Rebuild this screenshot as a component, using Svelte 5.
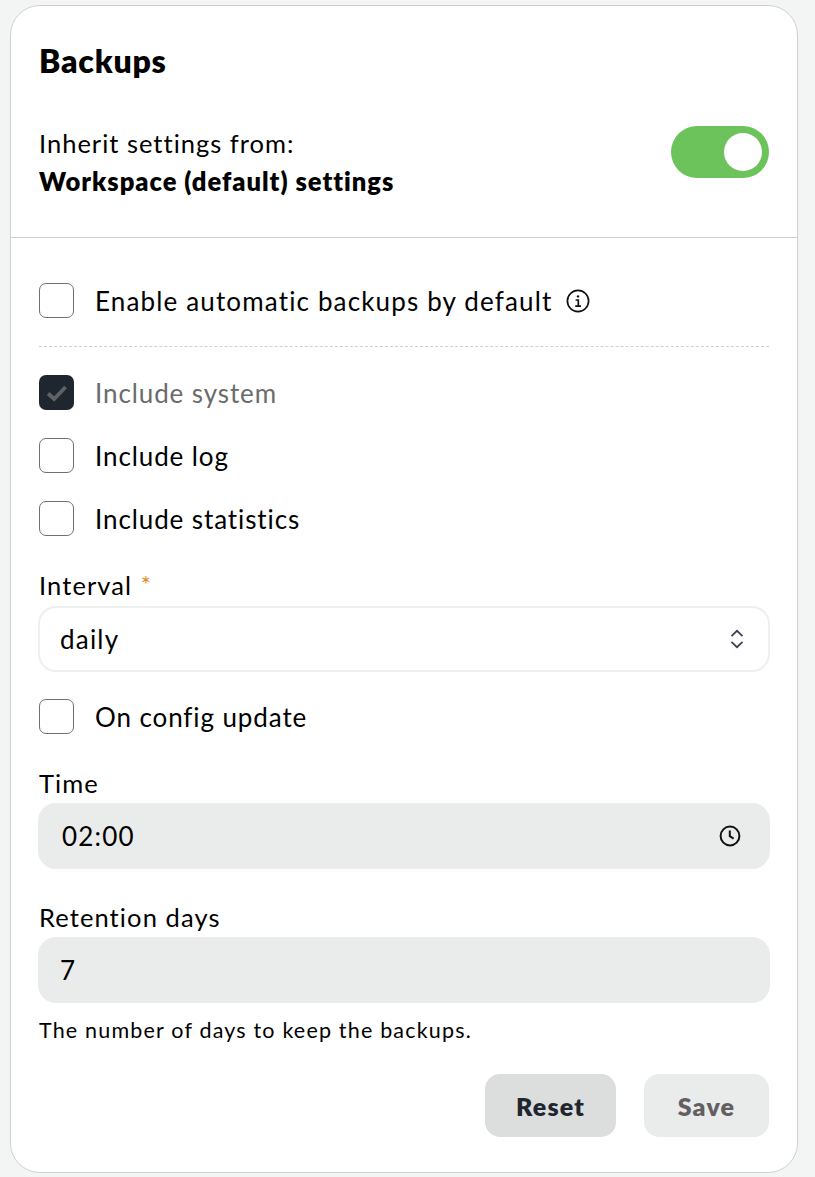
<script>
  let inherit = $state(true);
  let enableAuto = $state(false);
  let includeLog = $state(false);
  let includeStats = $state(false);
  let onConfig = $state(false);
  let interval = $state('daily');
  let time = $state('02:00');
  let retention = $state('7');

  const dirty = false;
</script>

<div class="page">
  <section class="card">
    <header class="head">
      <h2>Backups</h2>
      <div class="inherit">
        <div class="inherit-text">
          <div>Inherit settings from:</div>
          <strong>Workspace (default) settings</strong>
        </div>
        <button class="toggle" class:on={inherit} aria-label="Inherit settings" onclick={() => (inherit = !inherit)}>
          <span class="knob"></span>
        </button>
      </div>
    </header>

    <div class="body">
      <label class="check first">
        <input type="checkbox" bind:checked={enableAuto} />
        <span>Enable automatic backups by default</span>
        <svg class="info" viewBox="0 0 24 24" width="24" height="24" fill="none" stroke="currentColor">
          <circle cx="12" cy="12" r="10.6" stroke-width="1.7" />
          <circle cx="12" cy="7.4" r="1.2" fill="currentColor" stroke="none" />
          <path d="M9.6 11h2.7v6M9.2 17.2h5.8" stroke-width="1.7" />
        </svg>
      </label>

      <div class="dashed"></div>

      <div class="check disabled">
        <span class="box-checked">
          <svg viewBox="0 0 20 20" width="24" height="24" fill="none"><path d="M2.6 10.4l5 4.6 9.6-10" stroke="#5f6166" stroke-width="3.2" /></svg>
        </span>
        <span>Include system</span>
      </div>
      <label class="check">
        <input type="checkbox" bind:checked={includeLog} />
        <span>Include log</span>
      </label>
      <label class="check">
        <input type="checkbox" bind:checked={includeStats} />
        <span>Include statistics</span>
      </label>

      <div class="field interval">
        <label for="interval">Interval <em>*</em></label>
        <div class="control select">
          <input id="interval" bind:value={interval} />
          <svg viewBox="0 0 14 20" width="14" height="20" fill="none" stroke="#374151" stroke-width="1.7">
            <path d="M1.5 7.2L7 1.8l5.5 5.4M1.5 12.8L7 18.2l5.5-5.4" />
          </svg>
        </div>
      </div>

      <label class="check config">
        <input type="checkbox" bind:checked={onConfig} />
        <span>On config update</span>
      </label>

      <div class="field time">
        <label for="time">Time</label>
        <div class="control filled">
          <input id="time" bind:value={time} />
          <svg viewBox="0 0 22 22" width="22" height="22" fill="none" stroke="#111" stroke-width="2">
            <circle cx="11" cy="11" r="9.4" />
            <path d="M10.8 5.6v5.6l3.8 2.4" />
          </svg>
        </div>
      </div>

      <div class="field retention">
        <label for="retention">Retention days</label>
        <div class="control filled">
          <input id="retention" bind:value={retention} />
        </div>
        <p class="help">The number of days to keep the backups.</p>
      </div>

      <div class="actions">
        <button class="btn reset">Reset</button>
        <button class="btn save" disabled={!dirty}>Save</button>
      </div>
    </div>
  </section>
</div>

<style>
  :global(body) {
    margin: 0;
    background: #f3f5f4;
    font-family: "Lato", "Open Sans", sans-serif;
    color: #000;
  }

  .page {
    padding: 5px 17px 4px 10px;
  }

  .card {
    background: #fff;
    border: 1px solid #cfd1d1;
    border-radius: 30px;
    height: 1168px;
    box-sizing: border-box;
  }

  .head {
    padding: 35px 28px 0;
    height: 232px;
    box-sizing: border-box;
    border-bottom: 1px solid #cfd1d1;
  }
  h2 {
    margin: 0;
    font-size: 32px;
    line-height: 40px;
    font-weight: 800;
    letter-spacing: 0.8px;
  }
  .inherit {
    display: flex;
    justify-content: space-between;
    align-items: flex-start;
    margin-top: 43px;
  }
  .inherit-text {
    font-size: 25.5px;
    line-height: 38px;
    letter-spacing: 1px;
  }
  .inherit-text strong {
    font-weight: 800;
    display: block;
  }

  .toggle {
    width: 98px;
    height: 52px;
    margin-top: 2px;
    border-radius: 26px;
    border: none;
    padding: 7px;
    background: #c9cccc;
    display: flex;
    cursor: pointer;
  }
  .toggle.on {
    background: #6cc35c;
    justify-content: flex-end;
  }
  .knob {
    width: 38px;
    height: 38px;
    border-radius: 50%;
    background: #fff;
  }

  .body {
    padding: 45px 28px 0;
  }

  .check {
    display: flex;
    align-items: center;
    gap: 21px;
    height: 35px;
    font-size: 26px;
    letter-spacing: 0.9px;
    margin-bottom: 28px;
  }
  .check.first {
    margin-bottom: 0;
    letter-spacing: 1.15px;
  }
  .check input {
    appearance: none;
    width: 35px;
    height: 35px;
    margin: 0;
    flex: none;
    background: #fff;
    border: 1px solid #6b7072;
    border-radius: 7px;
    cursor: pointer;
  }
  .check input:checked {
    background: #1f2630;
  }
  .info {
    color: #111;
    margin-left: -7px;
  }

  .dashed {
    border-top: 1px dashed #cfd1d1;
    margin: 28px 0;
  }

  .disabled {
    color: #6b6b6b;
  }
  .box-checked {
    width: 35px;
    height: 35px;
    flex: none;
    background: #1f2630;
    border-radius: 7px;
    display: flex;
    align-items: center;
    justify-content: center;
  }

  .field label {
    display: block;
    font-size: 25.5px;
    line-height: 32px;
    letter-spacing: 1.1px;
    margin-bottom: 4px;
  }
  .field em {
    color: #e08a2c;
    font-style: normal;
    font-size: 24px;
    margin-left: 1px;
    vertical-align: 2px;
  }
  .interval {
    margin-top: 32px;
  }
  .interval label {
    margin-bottom: 5px;
  }
  .config {
    margin: 27px 0 0;
  }
  .time {
    margin-top: 33px;
  }
  .retention {
    margin-top: 32px;
  }

  .control {
    display: flex;
    align-items: center;
    height: 66px;
    margin: 0 -1px;
    padding: 0 28px 0 22px;
    box-sizing: border-box;
    border-radius: 18px;
  }
  .control input {
    flex: 1;
    min-width: 0;
    border: none;
    outline: none;
    background: none;
    padding: 0;
    font: inherit;
    font-size: 26px;
    letter-spacing: 1.2px;
    color: #000;
  }
  .select {
    border: 2px solid #eeefef;
    padding: 0 24px 0 20px;
  }
  .filled {
    background: #eaebeb;
    padding-right: 29px;
  }
  .time input {
    padding-left: 2px;
  }

  .help {
    margin: 14px 0 0;
    font-size: 21.5px;
    line-height: 26px;
    letter-spacing: 1.18px;
  }

  .actions {
    display: flex;
    justify-content: flex-end;
    gap: 28px;
    margin-top: 31px;
  }
  .btn {
    height: 63px;
    border: none;
    border-radius: 15px;
    font: inherit;
    font-size: 25px;
    font-weight: 800;
    letter-spacing: 1.2px;
    cursor: pointer;
  }
  .reset {
    width: 131px;
    background: #dcdddd;
    color: #1f2630;
  }
  .save {
    width: 125px;
    background: #eaebeb;
    color: #625f63;
    cursor: default;
  }
</style>
